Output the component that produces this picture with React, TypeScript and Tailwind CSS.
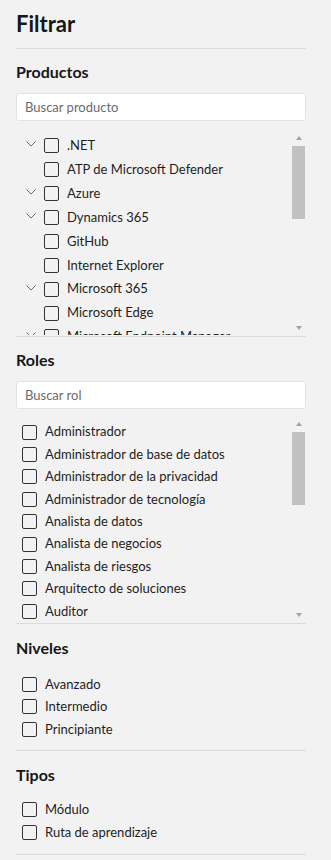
import React from "react";

const productos = [
  { name: ".NET", tree: true },
  { name: "ATP de Microsoft Defender", tree: false },
  { name: "Azure", tree: true },
  { name: "Dynamics 365", tree: true },
  { name: "GitHub", tree: false },
  { name: "Internet Explorer", tree: false },
  { name: "Microsoft 365", tree: true },
  { name: "Microsoft Edge", tree: false },
  { name: "Microsoft Endpoint Manager", tree: true },
];

const roles = [
  "Administrador",
  "Administrador de base de datos",
  "Administrador de la privacidad",
  "Administrador de tecnología",
  "Analista de datos",
  "Analista de negocios",
  "Analista de riesgos",
  "Arquitecto de soluciones",
  "Auditor",
];

const niveles = ["Avanzado", "Intermedio", "Principiante"];
const tipos = ["Módulo", "Ruta de aprendizaje"];

function Box() {
  return <span className="block w-[15px] h-[15px] shrink-0 border border-[#333] rounded-[2px] bg-transparent" />;
}

function Chevron() {
  return (
    <svg width="10" height="6" viewBox="0 0 10 6" className="-mt-[3px]">
      <path d="M0.5 0.5 L5 5 L9.5 0.5" fill="none" stroke="#6a6a6a" strokeWidth="1" />
    </svg>
  );
}

function Scrollbar() {
  return (
    <div className="w-[17px] shrink-0 flex flex-col pl-[3px] pr-[1px]">
      <div className="h-[14px] flex items-center justify-center">
        <span className="w-0 h-0 border-l-[3.5px] border-r-[3.5px] border-b-[4px] border-l-transparent border-r-transparent border-b-[#a3a3a3]" />
      </div>
      <div className="mt-px h-[73px] bg-[#c1c1c1]" />
      <div className="flex-1" />
      <div className="h-[14px] flex items-center justify-center">
        <span className="w-0 h-0 border-l-[3.5px] border-r-[3.5px] border-t-[4px] border-l-transparent border-r-transparent border-t-[#a3a3a3]" />
      </div>
    </div>
  );
}

function Search({ placeholder }: { placeholder: string }) {
  return (
    <input
      type="text"
      placeholder={placeholder}
      className="block w-full h-[28px] px-2 bg-white border border-[#e3e3e3] rounded-[3px] text-[13px] text-[#1e1e1e] placeholder:text-[#6b6b6b] outline-none"
    />
  );
}

function Heading({ children }: { children: React.ReactNode }) {
  return <h2 className="text-[16px] leading-[24px] font-bold text-[#171717]">{children}</h2>;
}

export default function App() {
  return (
    <div className="min-h-[860px] w-full bg-[#f2f2f2] pl-4 pr-[25px] text-[#1e1e1e] font-['Lato','Liberation_Sans',sans-serif]">
      {/* Title */}
      <div className="pt-[10px] pb-[10px] border-b border-[#dcdcdc]">
        <h1 className="text-[22px] leading-[28px] font-bold text-[#171717]">Filtrar</h1>
      </div>

      {/* Productos */}
      <section className="pt-[11px] pb-[1px] border-b border-[#dcdcdc]">
        <Heading>Productos</Heading>
        <div className="mt-[9px]">
          <Search placeholder="Buscar producto" />
        </div>
        <div className="mt-[10px] h-[204px] flex">
          <ul className="flex-1 overflow-hidden pt-[3px]">
            {productos.map((p) => (
              <li key={p.name} className="h-[23.875px] flex items-center pl-[10px] gap-2 text-[13px] whitespace-nowrap">
                <span className="w-[10px] flex justify-center">{p.tree && <Chevron />}</span>
                <Box />
                <span>{p.name}</span>
              </li>
            ))}
          </ul>
          <Scrollbar />
        </div>
      </section>

      {/* Roles */}
      <section className="pt-[11px] pb-[1px] border-b border-[#dcdcdc]">
        <Heading>Roles</Heading>
        <div className="mt-[9px]">
          <Search placeholder="Buscar rol" />
        </div>
        <div className="mt-[8px] h-[205px] flex">
          <ul className="flex-1 overflow-hidden pt-[4px]">
            {roles.map((r) => (
              <li key={r} className="h-[22.4px] flex items-center pl-[6px] gap-2 text-[13px] whitespace-nowrap">
                <Box />
                <span>{r}</span>
              </li>
            ))}
          </ul>
          <Scrollbar />
        </div>
      </section>

      {/* Niveles */}
      <section className="pt-[12px] pb-[9px] border-b border-[#dcdcdc]">
        <Heading>Niveles</Heading>
        <ul className="mt-[13px]">
          {niveles.map((n) => (
            <li key={n} className="h-[22.5px] flex items-center pl-[6px] gap-2 text-[13px]">
              <Box />
              <span>{n}</span>
            </li>
          ))}
        </ul>
      </section>

      {/* Tipos */}
      <section className="pt-[12px] pb-[10px] border-b border-[#dcdcdc]">
        <Heading>Tipos</Heading>
        <ul className="mt-[12px]">
          {tipos.map((t) => (
            <li key={t} className="h-[22.5px] flex items-center pl-[6px] gap-2 text-[13px]">
              <Box />
              <span>{t}</span>
            </li>
          ))}
        </ul>
      </section>
    </div>
  );
}
